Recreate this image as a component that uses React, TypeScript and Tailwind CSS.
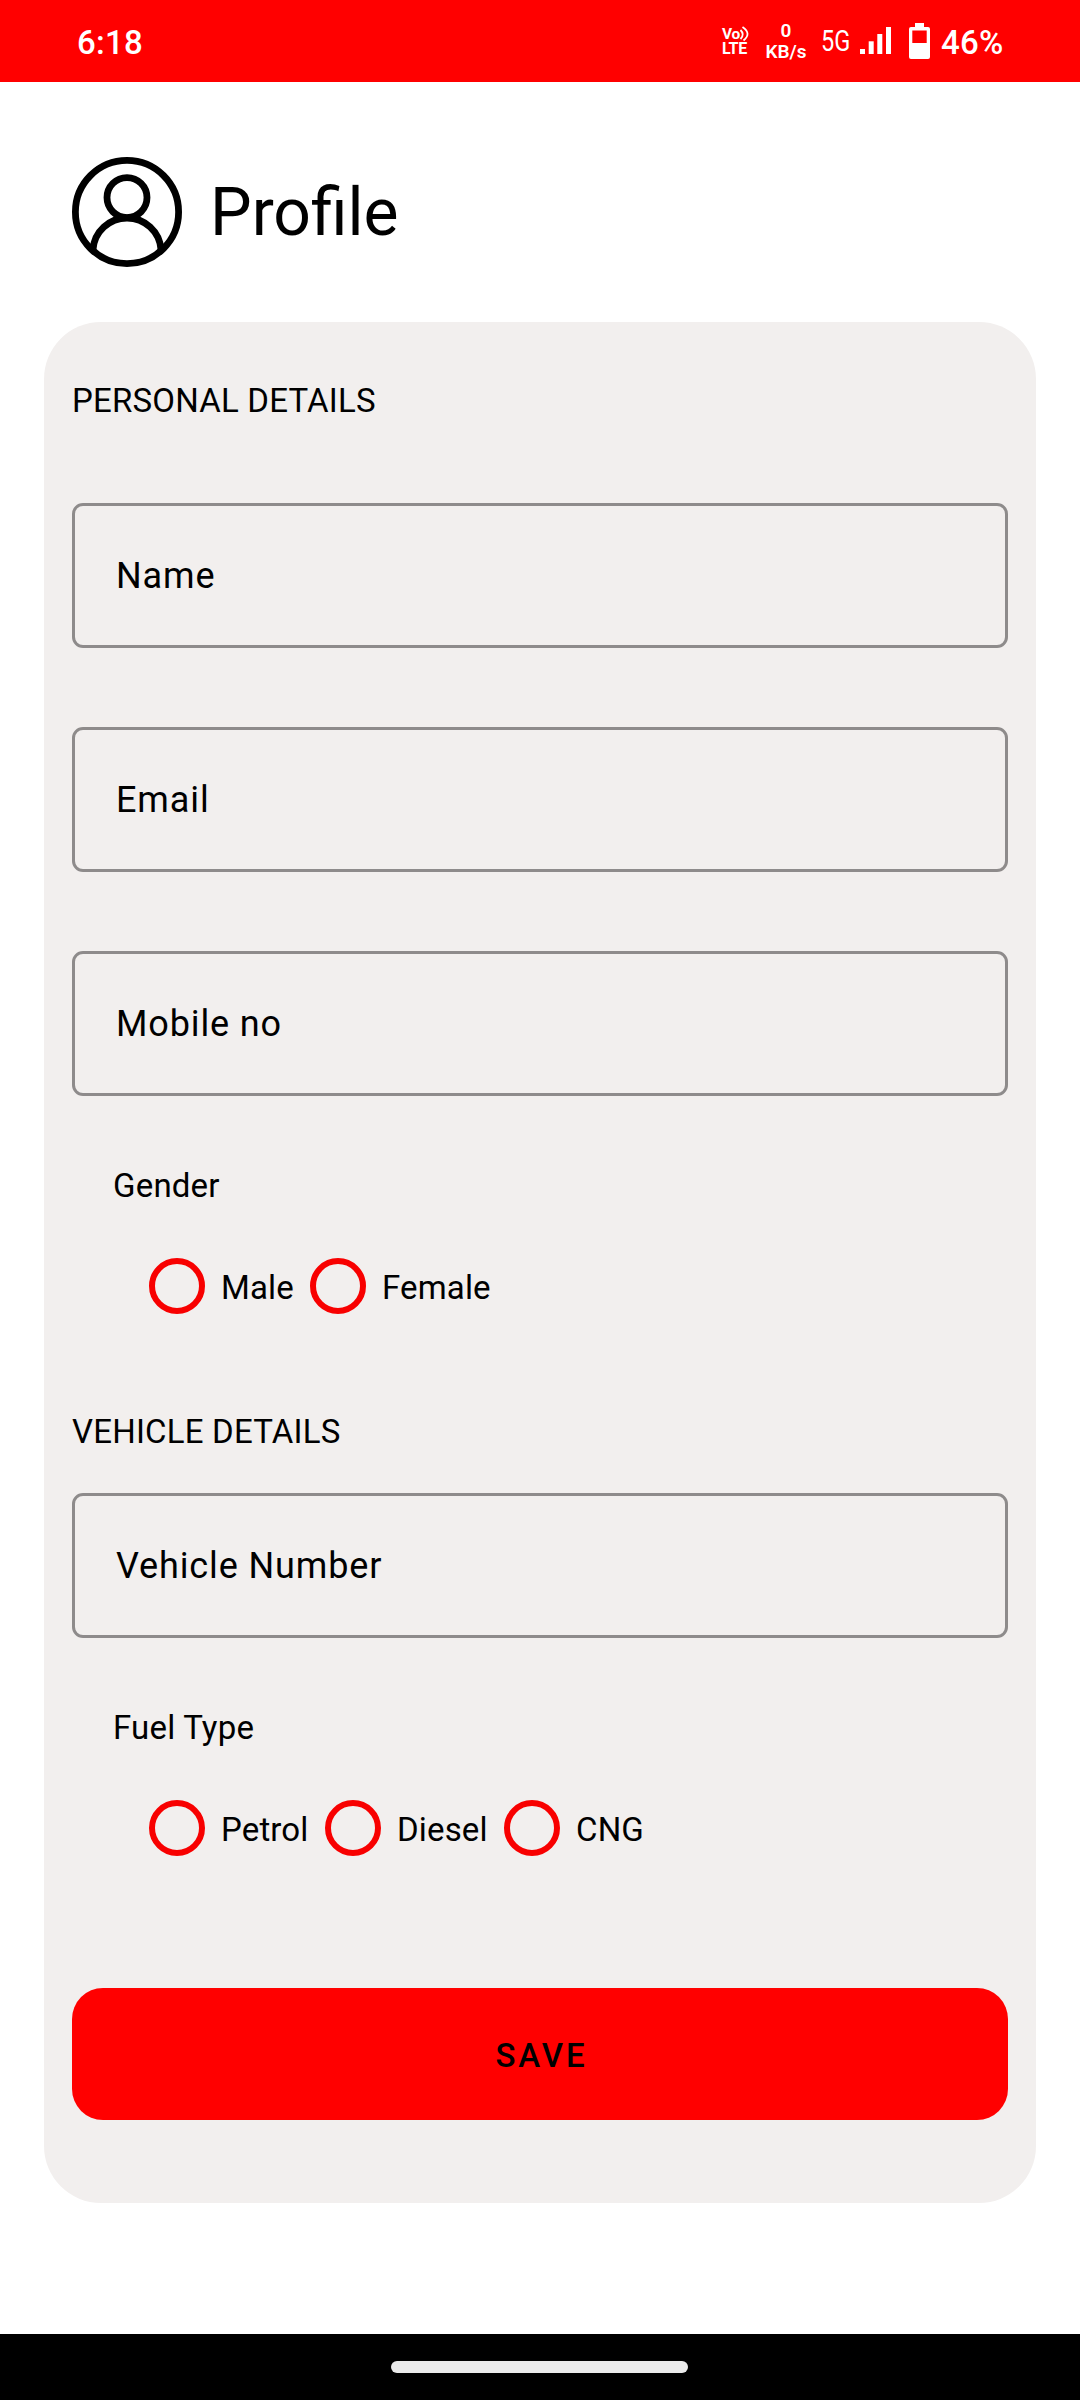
function ProfileIcon() {
  return (
    <svg className="h-[110px] w-[110px]" viewBox="0 0 110 110" fill="none" stroke="#000" strokeWidth="6.8">
      <circle cx="55" cy="55" r="51.6" />
      <circle cx="55" cy="40.6" r="20" />
      <path d="M21 92.5 A34.1 34.1 0 0 1 89 92.5" />
    </svg>
  );
}

function StatusBar() {
  return (
    <header className="flex h-[82px] items-start bg-[#ff0000] pl-[77px] font-medium text-white">
      <span className="mt-[23px] w-[644px] text-[33px] leading-10 tracking-[0.3px]">6:18</span>
      <div className="relative mt-[26px] flex h-[30px] w-[46px] flex-col">
        <span className="h-[14px] pl-px text-[15.5px] font-bold leading-[16px] tracking-[-0.4px]">Vo</span>
        <span className="h-[16px] pl-px text-[16px] font-bold leading-[18px] tracking-[-0.3px]">LTE</span>
        <svg className="absolute left-[18px] top-0 h-[16px] w-[11px]" viewBox="0 0 11 16" fill="none" stroke="#fff" strokeWidth="1.8">
          <path d="M1.5 4 Q6 8.5 1.5 13" />
          <path d="M3.5 1 Q13 7.5 4.5 14.5" />
        </svg>
      </div>
      <div className="mt-[21px] flex w-[38px] flex-col items-center text-[19px] font-semibold leading-5">
        <span>0</span>
        <span className="mt-px leading-5">KB/s</span>
      </div>
      <span className="ml-4 mt-[21px] w-[39px] origin-left scale-x-[0.8] text-[29.5px] font-normal leading-10">5G</span>
      <svg className="mt-[27px] h-[27px] w-[31px]" viewBox="0 0 31 27" fill="#fff">
        <rect x="0" y="22" width="5" height="5" />
        <rect x="8.7" y="14.3" width="5" height="12.7" />
        <rect x="17.3" y="7" width="5" height="20" />
        <rect x="26" y="0" width="5" height="27" />
      </svg>
      <svg className="ml-[18px] mt-[23px] h-[36px] w-[21px]" viewBox="0 0 21 36" fill="#fff">
        <path
          fillRule="evenodd"
          d="M6 0H15V4H19Q21 4 21 6V34Q21 36 19 36H2Q0 36 0 34V6Q0 4 2 4H6ZM3.3 7.5V20H17.7V7.5Z"
        />
      </svg>
      <span className="ml-[11px] mt-[23px] text-[33px] leading-10 tracking-[0.3px]">46%</span>
    </header>
  );
}

function Field({ label }: { label: string }) {
  return (
    <div className="flex h-[145px] items-center rounded-[11px] border-[3px] border-[#8e8b8b] pl-[41px]">
      <span className="h-10 text-[36px] leading-10 tracking-[0.88px]">{label}</span>
    </div>
  );
}

function Radio({ label, width }: { label: string; width: string }) {
  return (
    <div className={`flex h-14 shrink-0 items-center ${width}`}>
      <span className="mr-4 h-14 w-14 shrink-0 rounded-full border-[6px] border-[#f80000]" />
      <span className="mt-[3px] text-[33px] leading-10 tracking-[0.15px]">{label}</span>
    </div>
  );
}

export default function App() {
  return (
    <div className="flex h-[2400px] w-[1080px] flex-col bg-white font-['Roboto',sans-serif] text-black">
      <StatusBar />
      <div className="mt-[75px] flex h-[110px] items-center pl-[72px]">
        <ProfileIcon />
        <h1 className="ml-[28px] mt-[2px] text-[66px] leading-[80px]">Profile</h1>
      </div>
      <main className="mx-[44px] mt-[55px] flex h-[1881px] flex-col rounded-[57px] bg-[#f2efee] px-[28px] pt-[59px]">
        <h2 className="h-10 text-[33px] leading-10 tracking-[0.2px]">PERSONAL DETAILS</h2>
        <div className="mt-[82px] flex flex-col gap-[79px]">
          <Field label="Name" />
          <Field label="Email" />
          <Field label="Mobile no" />
        </div>
        <p className="ml-[41px] mt-[70px] h-10 text-[33px] leading-10 tracking-[0.2px]">Gender</p>
        <div className="ml-[77px] mt-[52px] flex">
          <Radio label="Male" width="w-[161px]" />
          <Radio label="Female" width="w-[200px]" />
        </div>
        <h2 className="mt-[98px] h-10 text-[33px] leading-10 tracking-[0.2px]">VEHICLE DETAILS</h2>
        <div className="mt-[41px]">
          <Field label="Vehicle Number" />
        </div>
        <p className="ml-[41px] mt-[70px] h-10 text-[33px] leading-10 tracking-[0.2px]">Fuel Type</p>
        <div className="ml-[77px] mt-[52px] flex">
          <Radio label="Petrol" width="w-[176px]" />
          <Radio label="Diesel" width="w-[179px]" />
          <Radio label="CNG" width="w-[150px]" />
        </div>
        <button className="mt-[132px] h-[132px] rounded-[31px] bg-[#ff0000] pl-[3px] pt-[3px] text-[33px] font-medium leading-10 tracking-[2.9px]">
          SAVE
        </button>
      </main>
      <footer className="mt-auto flex h-[66px] bg-black pl-[391px] pt-[27px]">
        <span className="h-[12px] w-[297px] rounded-full bg-[#ebebeb]" />
      </footer>
    </div>
  );
}
